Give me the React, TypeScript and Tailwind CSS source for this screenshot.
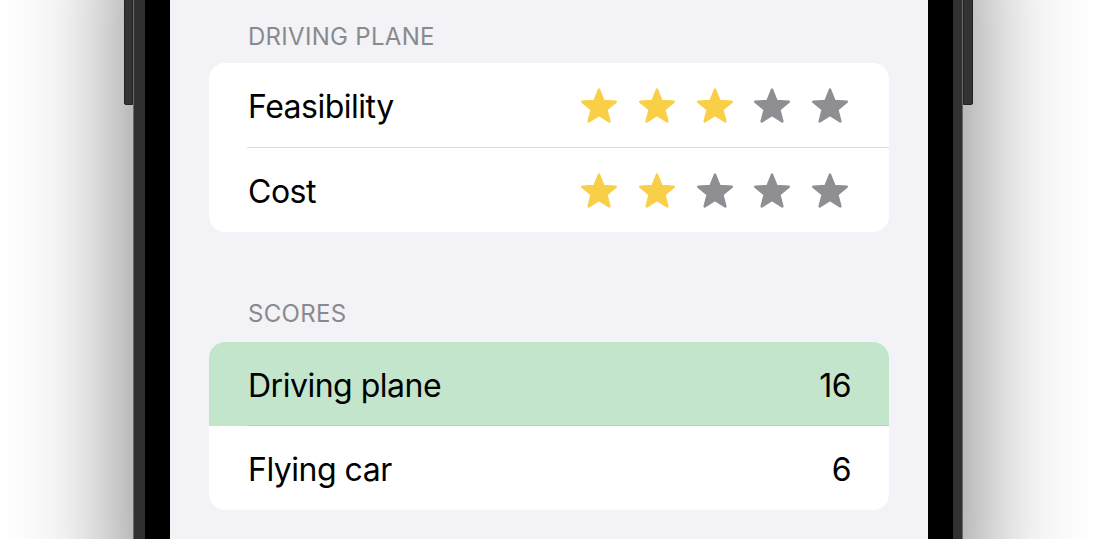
import React from "react";

const FONT = { fontFamily: "Inter, 'Noto Sans', 'Liberation Sans', sans-serif" };

function Star({ on }: { on: boolean }) {
  return (
    <svg width="36" height="35" viewBox="1.25 1.75 21.5 20.5" className="shrink-0">
      <polygon
        points="12,2.5 14.7,9.28 21.99,9.76 16.37,14.42 18.17,21.49 12,17.6 5.83,21.49 7.63,14.42 2.01,9.76 9.3,9.28"
        fill={on ? "#F9CF47" : "#8E8E93"}
        stroke={on ? "#F9CF47" : "#8E8E93"}
        strokeWidth="1.5"
        strokeLinejoin="round"
      />
    </svg>
  );
}

function Stars({ n }: { n: number }) {
  return (
    <div className="flex items-center gap-[21.75px]">
      {[0, 1, 2, 3, 4].map((i) => (
        <Star key={i} on={i < n} />
      ))}
    </div>
  );
}

function Label({ children }: { children: React.ReactNode }) {
  return <span className="pt-[4px] text-[32px] tracking-[-0.5px] text-black">{children}</span>;
}

export default function App() {
  return (
    <div className="w-[1098px] h-[539px] overflow-hidden bg-white flex justify-start pl-[133px]" style={FONT}>
      <div className="relative -mt-[100px] h-[740px] w-[830px] shrink-0 flex bg-[#303030] border-l border-r border-[#6b6b6b] pl-[11px] pr-[9px] shadow-[0_0_110px_rgba(0,0,0,0.55)]">
        <div className="absolute left-[-10px] top-0 h-[205px] w-[9px] bg-[#333] border border-[#222] rounded-bl-[2px]" />
        <div className="absolute right-[-11px] top-0 h-[205px] w-[10px] bg-[#333] border border-[#222] rounded-br-[2px]" />
        <div className="flex-1 flex bg-black px-[25px]">
          <div className="flex-1 bg-[#F2F2F7] pt-[123px] px-[39px]">
            <div className="pl-[39px] text-[24px] leading-[28px] text-[#8A8A8E] tracking-[0.3px]">DRIVING PLANE</div>
            <div className="mt-[12px] bg-white rounded-[16px] overflow-hidden">
              <div className="h-[84px] flex items-center justify-between pl-[39px] pr-[41px]">
                <Label>Feasibility</Label>
                <Stars n={3} />
              </div>
              <div className="ml-[38px] h-px bg-[#DCDCDE]" />
              <div className="h-[84px] flex items-center justify-between pl-[39px] pr-[41px]">
                <Label>Cost</Label>
                <Stars n={2} />
              </div>
            </div>
            <div className="mt-[68px] pl-[39px] text-[24px] leading-[28px] text-[#8A8A8E] tracking-[0.3px]">SCORES</div>
            <div className="mt-[14px] bg-white rounded-[16px] overflow-hidden">
              <div className="h-[83px] flex items-center justify-between pl-[39px] pr-[38px] bg-[#C3E5CC]">
                <Label>Driving plane</Label>
                <Label>16</Label>
              </div>
              <div className="h-px bg-[#C3E5CC]">
                <div className="ml-[38px] h-px bg-[#B7D3BE]" />
              </div>
              <div className="h-[84px] flex items-center justify-between pl-[39px] pr-[38px]">
                <Label>Flying car</Label>
                <Label>6</Label>
              </div>
            </div>
          </div>
        </div>
      </div>
    </div>
  );
}
